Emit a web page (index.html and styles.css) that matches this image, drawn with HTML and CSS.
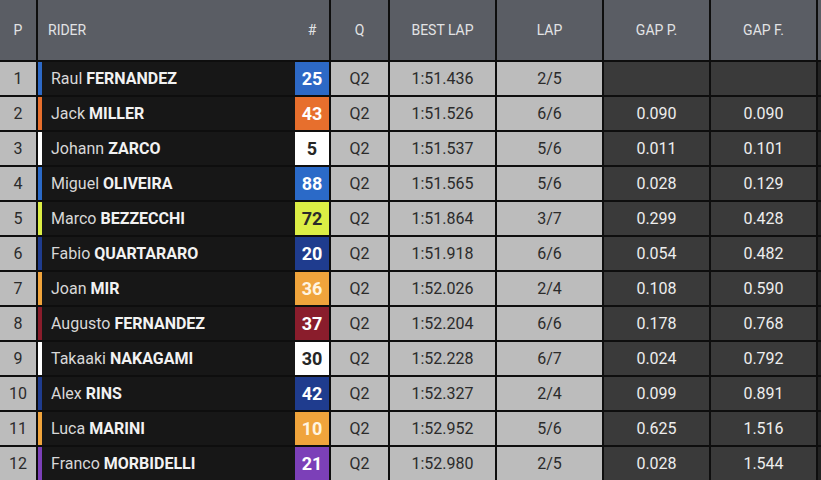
FILE: index.html
```html
<!DOCTYPE html>
<html lang="en">
<head>
<meta charset="utf-8">
<title>Qualifying results</title>
<link rel="stylesheet" href="styles.css">
</head>
<body>
<div class="table">
  <div class="th">P</div>
  <div class="th th-rider"><span>RIDER</span><span class="hash">#</span></div>
  <div class="th">Q</div>
  <div class="th">BEST LAP</div>
  <div class="th">LAP</div>
  <div class="th">GAP P.</div>
  <div class="th">GAP F.</div>
  <div class="th th-end"></div>

  <div class="pos">1</div>
  <div class="rider c-blue"><span class="name">Raul <b>FERNANDEZ</b></span><span class="num">25</span></div>
  <div class="lt">Q2</div><div class="lt">1:51.436</div><div class="lt">2/5</div>
  <div class="dk"></div><div class="dk"></div><div class="end"></div>

  <div class="pos">2</div>
  <div class="rider c-orange"><span class="name">Jack <b>MILLER</b></span><span class="num">43</span></div>
  <div class="lt">Q2</div><div class="lt">1:51.526</div><div class="lt">6/6</div>
  <div class="dk">0.090</div><div class="dk">0.090</div><div class="end"></div>

  <div class="pos">3</div>
  <div class="rider c-white"><span class="name">Johann <b>ZARCO</b></span><span class="num">5</span></div>
  <div class="lt">Q2</div><div class="lt">1:51.537</div><div class="lt">5/6</div>
  <div class="dk">0.011</div><div class="dk">0.101</div><div class="end"></div>

  <div class="pos">4</div>
  <div class="rider c-blue2"><span class="name">Miguel <b>OLIVEIRA</b></span><span class="num">88</span></div>
  <div class="lt">Q2</div><div class="lt">1:51.565</div><div class="lt">5/6</div>
  <div class="dk">0.028</div><div class="dk">0.129</div><div class="end"></div>

  <div class="pos">5</div>
  <div class="rider c-lime"><span class="name">Marco <b>BEZZECCHI</b></span><span class="num">72</span></div>
  <div class="lt">Q2</div><div class="lt">1:51.864</div><div class="lt">3/7</div>
  <div class="dk">0.299</div><div class="dk">0.428</div><div class="end"></div>

  <div class="pos">6</div>
  <div class="rider c-navy"><span class="name">Fabio <b>QUARTARARO</b></span><span class="num">20</span></div>
  <div class="lt">Q2</div><div class="lt">1:51.918</div><div class="lt">6/6</div>
  <div class="dk">0.054</div><div class="dk">0.482</div><div class="end"></div>

  <div class="pos">7</div>
  <div class="rider c-amber"><span class="name">Joan <b>MIR</b></span><span class="num">36</span></div>
  <div class="lt">Q2</div><div class="lt">1:52.026</div><div class="lt">2/4</div>
  <div class="dk">0.108</div><div class="dk">0.590</div><div class="end"></div>

  <div class="pos">8</div>
  <div class="rider c-red"><span class="name">Augusto <b>FERNANDEZ</b></span><span class="num">37</span></div>
  <div class="lt">Q2</div><div class="lt">1:52.204</div><div class="lt">6/6</div>
  <div class="dk">0.178</div><div class="dk">0.768</div><div class="end"></div>

  <div class="pos">9</div>
  <div class="rider c-white"><span class="name">Takaaki <b>NAKAGAMI</b></span><span class="num">30</span></div>
  <div class="lt">Q2</div><div class="lt">1:52.228</div><div class="lt">6/7</div>
  <div class="dk">0.024</div><div class="dk">0.792</div><div class="end"></div>

  <div class="pos">10</div>
  <div class="rider c-navy"><span class="name">Alex <b>RINS</b></span><span class="num">42</span></div>
  <div class="lt">Q2</div><div class="lt">1:52.327</div><div class="lt">2/4</div>
  <div class="dk">0.099</div><div class="dk">0.891</div><div class="end"></div>

  <div class="pos">11</div>
  <div class="rider c-amber"><span class="name">Luca <b>MARINI</b></span><span class="num">10</span></div>
  <div class="lt">Q2</div><div class="lt">1:52.952</div><div class="lt">5/6</div>
  <div class="dk">0.625</div><div class="dk">1.516</div><div class="end"></div>

  <div class="pos">12</div>
  <div class="rider c-purple"><span class="name">Franco <b>MORBIDELLI</b></span><span class="num">21</span></div>
  <div class="lt">Q2</div><div class="lt">1:52.980</div><div class="lt">2/5</div>
  <div class="dk">0.028</div><div class="dk">1.544</div><div class="end"></div>
</div>
</body>
</html>
```
FILE: styles.css
```css
html, body {
  margin: 0;
  padding: 0;
  background: #0e0e0e;
}
body {
  width: 821px;
  height: 480px;
  overflow: hidden;
  font-family: Roboto, "Liberation Sans", sans-serif;
}
.table {
  display: grid;
  grid-template-columns: 36px 291px 57px 105px 105px 105px 105px 1fr;
  grid-template-rows: 60px repeat(12, 33px);
  gap: 2px;
  background: #0e0e0e;
  width: 821px;
  height: 480px;
}
.th {
  background: #5a5d64;
  color: #e2e3e5;
  font-size: 14px;
  display: flex;
  align-items: center;
  justify-content: center;
}
.th-rider {
  justify-content: space-between;
  padding-left: 10px;
}
.th-rider .hash {
  width: 34px;
  text-align: center;
}
.th-end {
  background: #5a5d64;
}
.pos, .lt {
  background: #bcbcbc;
  color: #2b2b2b;
  font-size: 16px;
  display: flex;
  align-items: center;
  justify-content: center;
}
.dk {
  background: #3a3a3a;
  color: #eeeeee;
  font-size: 16px;
  display: flex;
  align-items: center;
  justify-content: center;
}
.end {
  background: #232323;
}
.rider {
  background: #171717;
  display: flex;
  align-items: stretch;
  border-left: 4px solid var(--team);
}
.rider .name {
  flex: 1;
  display: flex;
  align-items: center;
  gap: 4px;
  padding-left: 9px;
  color: #d8d8d8;
  font-size: 16px;
}
.rider .name b {
  color: #f2f2f2;
  font-weight: 700;
}
.rider .num {
  width: 34px;
  background: var(--team);
  color: var(--ink, #ffffff);
  font-weight: 700;
  font-size: 18px;
  display: flex;
  align-items: center;
  justify-content: center;
}
.c-blue { --team: #2d69c6; }
.c-blue2 { --team: #2b6ac8; }
.c-orange { --team: #e76f2d; }
.c-white { --team: #ffffff; --ink: #262626; }
.c-lime { --team: #dcee45; --ink: #2a2a2a; }
.c-navy { --team: #1f3c8e; }
.c-amber { --team: #f0a43c; --ink: #fff4e0; }
.c-red { --team: #8a1d2c; }
.c-purple { --team: #7c40b8; }
```
